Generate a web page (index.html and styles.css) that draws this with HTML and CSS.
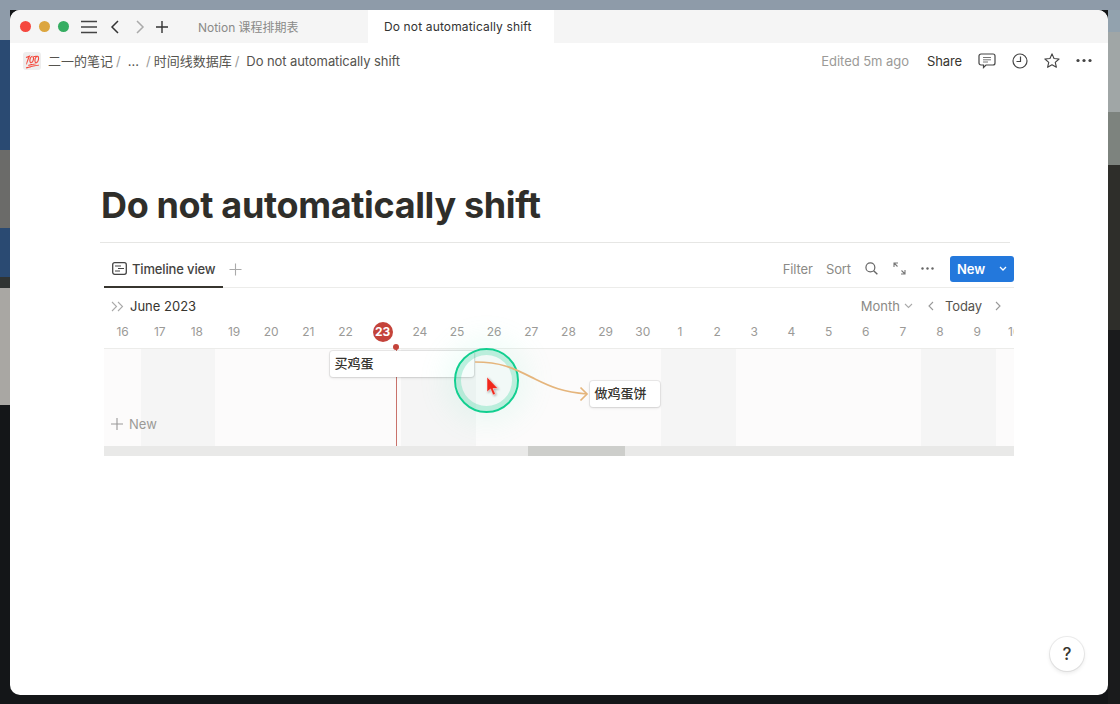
FILE: index.html
```html
<!DOCTYPE html>
<html lang="en">
<head>
<meta charset="utf-8">
<title>Do not automatically shift</title>
<link rel="stylesheet" href="styles.css">
</head>
<body>
<div class="window">
  <header class="titlebar">
    <div class="lights"><i class="light red"></i><i class="light yellow"></i><i class="light green"></i></div>
    <svg class="tb-icon menu" width="16" height="14" viewBox="0 0 16 14"><path d="M0 1.500h16M0 7h16M0 12.500h16" stroke="#444" stroke-width="1.400" fill="none"/></svg>
    <svg class="tb-icon back" width="10" height="14" viewBox="0 0 10 14"><path d="M8 1 2 7l6 6" stroke="#333" stroke-width="1.500" fill="none"/></svg>
    <svg class="tb-icon fwd" width="10" height="14" viewBox="0 0 10 14"><path d="m2 1 6 6-6 6" stroke="#aaa" stroke-width="1.500" fill="none"/></svg>
    <svg class="tb-icon plus" width="12" height="12" viewBox="0 0 12 12"><path d="M6 0v12M0 6h12" stroke="#333" stroke-width="1.400" fill="none"/></svg>
    <div class="tab">Notion 课程排期表</div>
    <div class="tab active">Do not automatically shift</div>
  </header>
  <nav class="crumbs">
    <span class="page-icon">💯</span>
    <span class="crumb first">二一的笔记</span><span class="sep">/</span>
    <span class="crumb dots">...</span><span class="sep s2">/</span>
    <span class="crumb">时间线数据库</span><span class="sep">/</span>
    <span class="crumb last">Do not automatically shift</span>
    <span class="edited">Edited 5m ago</span>
    <span class="share">Share</span>
    <svg class="act comment" width="18" height="16" viewBox="0 0 18 16"><path d="M3 1h12a2 2 0 0 1 2 2v7a2 2 0 0 1-2 2H8l-2.500 2.500V12H3a2 2 0 0 1-2-2V3a2 2 0 0 1 2-2Z" fill="none" stroke="#444" stroke-width="1.200"/><path d="M5 4.500h8M5 6.800h8M5 9h5" stroke="#777" stroke-width="1"/></svg>
    <svg class="act clock" width="16" height="16" viewBox="0 0 16 16"><circle cx="8" cy="8" r="7" fill="none" stroke="#444" stroke-width="1.200"/><path d="M8.500 3.500v5H4.500" fill="none" stroke="#444" stroke-width="1.200"/></svg>
    <svg class="act star" width="16" height="15" viewBox="0 0 18 17"><path d="m9 1 2.300 5.200 5.700.6-4.300 3.800 1.300 5.600L9 13.300l-5 2.900 1.300-5.600L1 6.800l5.700-.6Z" fill="none" stroke="#444" stroke-width="1.300" stroke-linejoin="round"/></svg>
    <svg class="act more" width="16" height="5" viewBox="0 0 16 5"><circle cx="2" cy="2.500" r="1.600" fill="#444"/><circle cx="8" cy="2.500" r="1.600" fill="#444"/><circle cx="14" cy="2.500" r="1.600" fill="#444"/></svg>
  </nav>
  <main class="page">
    <h1 class="title">Do not automatically shift</h1>
    <div class="rule"></div>
    <section class="db">
      <div class="db-bar">
        <div class="view-tab">
          <svg width="15" height="13" viewBox="0 0 15 13"><rect x=".7" y=".7" width="13.600" height="11.600" rx="2" fill="none" stroke="#444" stroke-width="1.300"/><path d="M3 4h6M6 6.500h6M3 9h5" stroke="#444" stroke-width="1.100"/></svg>
          <span>Timeline view</span>
        </div>
        <svg class="add-view" width="13" height="13" viewBox="0 0 13 13"><path d="M6.500 .5v12M.5 6.500h12" stroke="#aaa" stroke-width="1.100"/></svg>
        <div class="db-actions">
          <span class="db-link">Filter</span>
          <span class="db-link sort">Sort</span>
          <svg class="db-search" width="13" height="13" viewBox="0 0 14 14"><circle cx="5.800" cy="5.800" r="4.800" fill="none" stroke="#666" stroke-width="1.300"/><path d="m9.300 9.300 4 4" stroke="#666" stroke-width="1.500"/></svg>
          <svg class="db-expand" width="13" height="13" viewBox="0 0 13 13"><path d="M1 5V1h4M1 1l3.500 3.500M12 8v4H8M12 12 8.500 8.500" fill="none" stroke="#777" stroke-width="1.100"/></svg>
          <svg class="db-more" width="13" height="3" viewBox="0 0 13 3"><circle cx="1.500" cy="1.500" r="1.200" fill="#666"/><circle cx="6.500" cy="1.500" r="1.200" fill="#666"/><circle cx="11.500" cy="1.500" r="1.200" fill="#666"/></svg>
          <div class="new-btn"><span class="new-label">New</span><svg width="8" height="5" viewBox="0 0 8 5"><path d="m1 1 3 3 3-3" fill="none" stroke="#fff" stroke-width="1.300"/></svg></div>
        </div>
      </div>
      <div class="month-bar">
        <svg class="collapse" width="13" height="11" viewBox="0 0 13 11"><path d="m1 1 4.500 4.500L1 10M7 1l4.500 4.500L7 10" fill="none" stroke="#aaa" stroke-width="1.100"/></svg>
        <span class="month">June 2023</span>
        <div class="month-ctrl">
          <span class="scale">Month</span>
          <svg class="scale-caret" width="9" height="6" viewBox="0 0 9 6"><path d="m1 1 3.500 3.500L8 1" fill="none" stroke="#aaa" stroke-width="1.100"/></svg>
          <svg class="prev" width="7" height="10" viewBox="0 0 7 10"><path d="M6 1 2 5l4 4" fill="none" stroke="#999" stroke-width="1.100"/></svg>
          <span class="today">Today</span>
          <svg class="next" width="7" height="10" viewBox="0 0 7 10"><path d="m1 1 4 4-4 4" fill="none" stroke="#999" stroke-width="1.100"/></svg>
        </div>
      </div>
      <div class="days">
        <span>16</span><span>17</span><span>18</span><span>19</span><span>20</span><span>21</span><span>22</span><span class="cur"><b>23</b></span><span>24</span><span>25</span><span>26</span><span>27</span><span>28</span><span>29</span><span>30</span><span>1</span><span>2</span><span>3</span><span>4</span><span>5</span><span>6</span><span>7</span><span>8</span><span>9</span><span>10</span>
      </div>
      <div class="board">
        <div class="col"></div><div class="col we"></div><div class="col we"></div><div class="col"></div><div class="col"></div><div class="col"></div><div class="col"></div><div class="col"></div><div class="col we"></div><div class="col we"></div><div class="col"></div><div class="col"></div><div class="col"></div><div class="col"></div><div class="col"></div><div class="col we"></div><div class="col we"></div><div class="col"></div><div class="col"></div><div class="col"></div><div class="col"></div><div class="col"></div><div class="col we"></div><div class="col we"></div><div class="col"></div>
        <i class="today-line"></i>
        <i class="today-dot"></i>
        <div class="card card-a">买鸡蛋</div>
        <div class="card card-b">做鸡蛋饼</div>
        <div class="board-new"><svg width="12" height="12" viewBox="0 0 12 12"><path d="M6 0v12M0 6h12" stroke="#999" stroke-width="1.100"/></svg><span>New</span></div>
        <i class="halo"></i>
        <svg class="link" width="125" height="50" viewBox="0 0 125 50"><path d="M2 2C30 2 42 9 62 19c16 8 28 13 52 15" fill="none" stroke="#e5b57c" stroke-width="1.700"/><path d="m107.500 27.500 6.500 6.500-6.500 6.500" fill="none" stroke="#e5b57c" stroke-width="1.700"/></svg>
        <svg class="pointer" width="14" height="21" viewBox="0 0 14 21"><path d="M1 1v15l3.500-3 2.500 6 2.500-1-2.500-5.500H12Z" fill="#f0281c" stroke="#fff" stroke-opacity=".6" stroke-width=".8"/></svg>
      </div>
      <div class="scrollbar"><div class="thumb"></div></div>
    </section>
  </main>
  <div class="help">?</div>
</div>
</body>
</html>
```
FILE: styles.css
```css
* { box-sizing: border-box; }
html, body { margin: 0; height: 704px; overflow: hidden; }
body {
  padding: 10px 12px 9px 10px;
  font-family: Inter, "Noto Sans CJK SC", sans-serif;
  color: #37352f;
  background-color: #141618;
  background-image:
    linear-gradient(#8e9ba9 0 10px, transparent 10px),
    linear-gradient(#8e9ba9 0 40px, #2a4a72 40px 150px, #6b6b69 150px 228px, #2a4a72 228px 277px, #303433 277px 288px, #a9a7a3 288px 405px, #141618 405px),
    linear-gradient(#92a2ae 0 32px, #a0a6a6 32px 112px, #7d837e 112px 165px, #2e2e2a 165px 330px, #1a1b1c 330px);
  background-repeat: no-repeat;
  background-size: 100% 10px, 10px 100%, 12px 100%;
  background-position: 0 0, 0 0, right 0;
}
.window {
  position: relative;
  width: 1098px;
  height: 685px;
  background: #fff;
  border-radius: 10px;
  overflow: hidden;
  display: flex;
  flex-direction: column;
}

/* title bar */
.titlebar { flex: none; display: flex; align-items: center; height: 33px; background: #f5f5f5; padding-left: 10px; }
.lights { display: flex; gap: 7.5px; }
.light { width: 11.3px; height: 11.3px; border-radius: 50%; }
.red { background: #f5483f; }
.yellow { background: #dca63f; }
.green { background: #36ad62; }
.tb-icon { flex: none; }
.menu { margin-left: 12px; }
.back { margin-left: 13px; }
.fwd { margin-left: 15px; }
.plus { margin-left: 11px; }
.tab { flex: none; font-size: 12px; color: #8a8a88; margin-left: 30px; width: 170px; }
.tab.active { margin-left: 0; width: 186px; height: 33px; line-height: 33px; background: #fff; color: #333; padding-left: 16px; letter-spacing: .15px; }

/* breadcrumbs */
.crumbs { flex: none; display: flex; align-items: center; height: 35px; padding-left: 13px; font-size: 13px; color: #55534e; }
.page-icon { width: 18px; height: 18px; border-radius: 3px; background: #eee; font-size: 12px; line-height: 18px; text-align: center; overflow: hidden; font-family: "Noto Sans CJK SC", sans-serif; color: #e0322a; }
.crumb { white-space: nowrap; }
.first { margin-left: 7px; }
.sep { margin-left: 3px; color: #9a9a97; }
.s2 { margin-left: 7px; }
.sep + .crumb { margin-left: 3px; }
.sep + .dots { margin-left: 7px; }
.sep + .last { margin-left: 7px; letter-spacing: -.08px; }
.edited { margin-left: auto; color: #9b9a97; letter-spacing: -.05px; }
.share { margin-left: 18px; color: #37352f; letter-spacing: -.1px; }
.act { flex: none; }
.comment { margin-left: 16px; }
.clock { margin-left: 16px; }
.star { margin-left: 16px; }
.more { margin: 0 16px; }

/* page */
.page { flex: none; padding: 104px 0 0 90px; }
.title { margin: 0 0 0 1px; font-size: 36px; line-height: 46px; font-weight: 700; color: #2f2e2a; letter-spacing: -.35px; }
.rule { height: 1px; width: 910px; margin-top: 14px; background: #e6e6e4; }
.db { width: 910px; margin-left: 4px; overflow: hidden; }
.db-bar { display: flex; align-items: center; height: 45px; border-bottom: 1px solid #ececea; }
.view-tab { display: flex; align-items: center; align-self: stretch; width: 119px; gap: 5px; padding: 8px 0 0 8px; margin-bottom: -1px; border-bottom: 2px solid #37352f; font-size: 13px; font-weight: 500; color: #44433f; letter-spacing: -.15px; }
.add-view { margin-left: 6px; margin-top: 8px; }
.db-actions { margin-left: auto; display: flex; align-items: center; padding-top: 7px; }
.db-link { font-size: 13px; color: #8b8a86; letter-spacing: -.1px; }
.sort { margin-left: 13px; }
.db-search { margin-left: 14px; }
.db-expand { margin-left: 15px; }
.db-more { margin-left: 15px; }
.new-btn { display: flex; align-items: center; width: 64px; height: 26px; margin-left: 16px; padding-left: 7px; background: #2378dc; border-radius: 3px; color: #fff; font-size: 13px; font-weight: 600; }
.new-label { width: 42px; }

.month-bar { display: flex; align-items: center; height: 36px; padding-left: 7px; }
.collapse { flex: none; }
.month { margin-left: 6px; font-size: 13px; font-weight: 400; color: #37352f; }
.month-ctrl { margin-left: auto; display: flex; align-items: center; font-size: 13px; }
.scale { color: #8b8a86; }
.scale-caret { margin-left: 4.5px; }
.prev { margin-left: 13.5px; }
.today { margin-left: 11px; color: #55534e; letter-spacing: -.1px; }
.next { margin: 0 12px 0 13px; }

.days { display: grid; grid-template-columns: repeat(25, 37.17px); height: 27px; margin-top: -2px; border-bottom: 1px solid #ececea; font-size: 12px; color: #9b9a97; text-align: center; line-height: 20px; }
.days span { white-space: nowrap; }
.days b { display: inline-block; width: 20px; height: 20px; border-radius: 50%; background: #c4433a; color: #fff; font-weight: 700; font-size: 12px; line-height: 20px; }

.board { position: relative; display: grid; grid-template-columns: repeat(25, 37.17px); height: 97px; background: #fcfcfc; }
.col { background: #fcfbfb; }
.we { background: #f5f5f5; }
.today-line { position: absolute; left: 292px; top: 0; width: 1px; height: 97px; background: #c9726b; }
.today-dot { position: absolute; left: 289px; top: -5px; width: 6px; height: 6px; border-radius: 50%; background: #c4433a; }
.card { position: absolute; display: flex; align-items: center; height: 26px; background: #fff; border-radius: 3px; box-shadow: 0 0 0 1px rgba(15,15,15,.07), 0 1px 3px rgba(15,15,15,.12); font-size: 13px; font-weight: 500; color: #37352f; padding: 0 0 3px 5px; font-family: "Noto Sans CJK SC", sans-serif; }
.card-a { left: 225.5px; top: 2px; width: 144.5px; }
.card-b { left: 485.5px; top: 32px; width: 70px; }
.board-new { position: absolute; left: 7px; top: 67px; display: flex; align-items: center; gap: 6px; font-size: 13px; color: #9b9a97; }
.halo { position: absolute; left: 349.5px; top: -1.500px; width: 65px; height: 65px; border-radius: 50%; background: rgba(90,225,180,.06); border: 2px solid #12cf90; box-shadow: 0 0 26px 12px rgba(120,235,195,.1), inset 0 0 0 5px rgba(70,215,165,.32); }
.link { position: absolute; left: 369px; top: 11px; }
.pointer { position: absolute; left: 382px; top: 27px; filter: drop-shadow(1px 1px 1px rgba(0,0,0,.3)); }

.scrollbar { position: relative; height: 10px; background: #e9e9e8; }
.thumb { width: 97px; height: 10px; margin-left: 424px; background: #cdcecb; }

.help { position: absolute; right: 24px; bottom: 24px; width: 34px; height: 34px; border-radius: 50%; background: #fff; box-shadow: 0 0 0 1px rgba(15,15,15,.07), 0 2px 4px rgba(15,15,15,.1); font-size: 17px; font-weight: 500; line-height: 34px; text-align: center; color: #37352f; }
```
